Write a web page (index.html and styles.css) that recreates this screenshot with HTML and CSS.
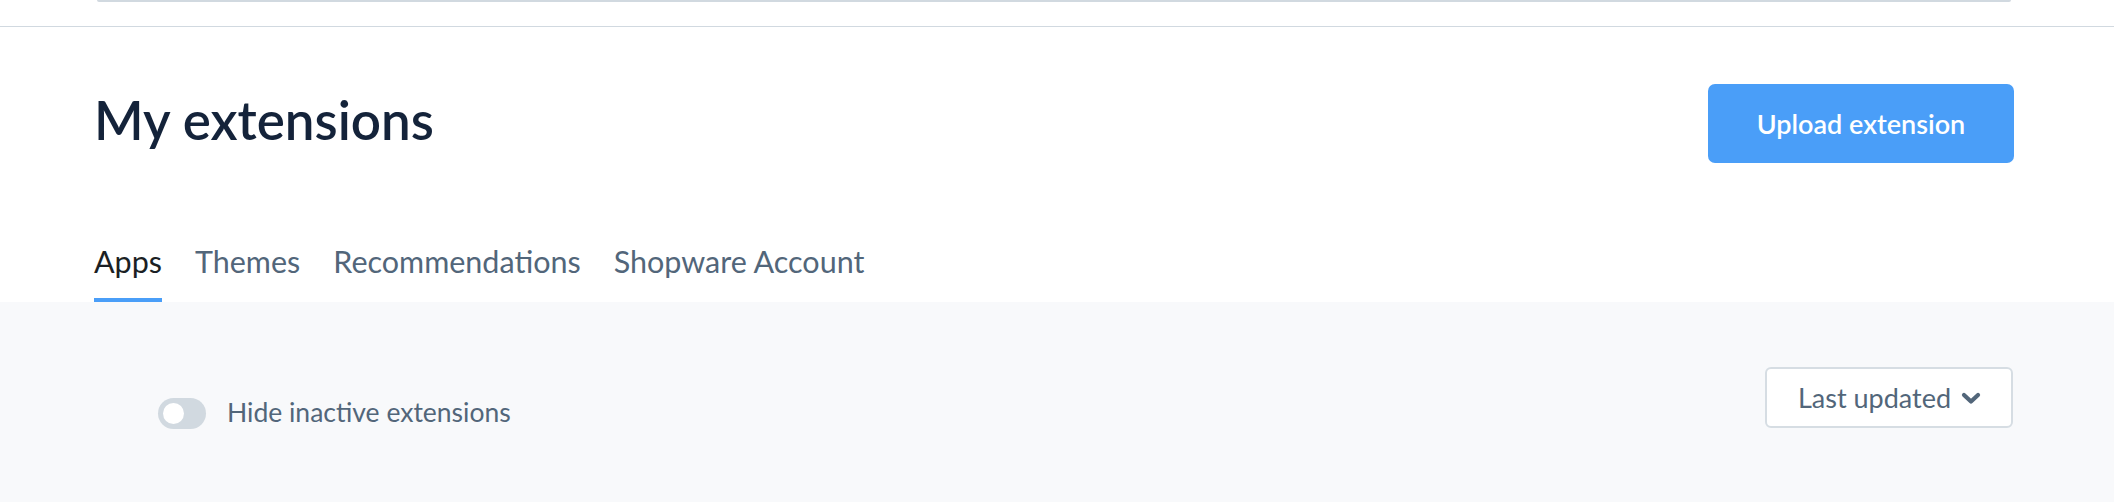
FILE: index.html
```html
<!DOCTYPE html>
<html lang="en">
<head>
<meta charset="utf-8">
<title>My extensions</title>
<link rel="stylesheet" href="styles.css">
</head>
<body>
<div class="topbar">
  <div class="search-edge"></div>
</div>
<div class="page-header">
  <h1 class="title">My extensions</h1>
  <button class="btn-primary" type="button">Upload extension</button>
</div>
<nav class="tabs">
  <a class="tab tab-active">Apps</a>
  <a class="tab">Themes</a>
  <a class="tab">Recommendations</a>
  <a class="tab">Shopware Account</a>
</nav>
<main class="content">
  <div class="filter-row">
    <label class="switch-field">
      <span class="switch"><span class="knob"></span></span>
      <span class="switch-label">Hide inactive extensions</span>
    </label>
    <div class="select">
      <span class="select-text">Last updated</span>
      <svg class="chevron" width="20" height="13" viewBox="0 0 20 13"><polyline points="3,3 10,9.5 17,3" fill="none" stroke="#52667a" stroke-width="4.2" stroke-linecap="round" stroke-linejoin="round"/></svg>
    </div>
  </div>
</main>
</body>
</html>
```

FILE: styles.css
```css
* { box-sizing: border-box; }
html, body {
  margin: 0;
  padding: 0;
  background: #ffffff;
  font-family: Lato, "Noto Sans", sans-serif;
}
body {
  width: 2114px;
  height: 502px;
  overflow: hidden;
  display: flex;
  flex-direction: column;
}
.topbar {
  height: 27px;
  border-bottom: 1px solid #d1d9e0;
  padding: 0 103px 0 97px;
}
.search-edge {
  height: 2px;
  background: #d1d9e0;
  border-radius: 0 0 4px 4px;
}
.page-header {
  display: flex;
  align-items: center;
  justify-content: space-between;
  padding: 0 100px 0 94px;
  margin-top: 57px;
  height: 79px;
}
.title {
  margin: 0;
  padding-bottom: 9px;
  font-size: 53px;
  font-weight: 600;
  color: #14233a;
  letter-spacing: 0;
}
.btn-primary {
  width: 306px;
  height: 79px;
  border: 0;
  border-radius: 7px;
  background: #4a9ef8;
  color: #ffffff;
  font-family: inherit;
  font-size: 27px;
  font-weight: 600;
  padding: 0;
}
.tabs {
  display: flex;
  gap: 33px;
  padding-left: 94px;
  margin-top: 78px;
}
.tab {
  font-size: 30.5px;
  line-height: 40px;
  color: #52667a;
  padding-bottom: 17px;
  border-bottom: 4px solid transparent;
}
.tab-active {
  color: #1b1f24;
  border-bottom-color: #4a9ef8;
}
.content {
  flex: 1;
  background: #f8f9fb;
}
.filter-row {
  display: flex;
  align-items: flex-start;
  justify-content: space-between;
  padding: 65px 101px 0 158px;
}
.switch-field {
  display: flex;
  align-items: center;
  gap: 21px;
  margin-top: 29px;
}
.switch {
  width: 48px;
  height: 31px;
  border-radius: 16px;
  background: #d1d9e0;
  display: flex;
  align-items: center;
  padding-left: 5px;
}
.knob {
  width: 21px;
  height: 21px;
  border-radius: 50%;
  background: #ffffff;
}
.switch-label {
  font-size: 26.5px;
  color: #52667a;
  padding-bottom: 3px;
}
.select {
  width: 248px;
  height: 61px;
  border: 2px solid #d6dde3;
  border-radius: 6px;
  background: #ffffff;
  display: flex;
  align-items: center;
  padding-left: 31px;
  gap: 10px;
}
.select-text {
  font-size: 27px;
  color: #52667a;
}
.chevron { display: block; margin-top: 2px; }
```
